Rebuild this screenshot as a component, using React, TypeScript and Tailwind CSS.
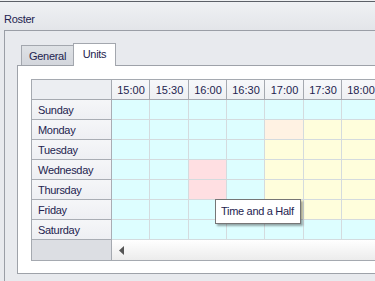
import React from "react";

const C = "bg-[#ddfeff]";
const Y = "bg-[#fffedc]";
const P = "bg-[#fff2e3]";
const K = "bg-[#ffdfe2]";

const times = ["15:00", "15:30", "16:00", "16:30", "17:00", "17:30", "18:00"];
const widths = ["w-[38px]", "w-[39px]", "w-[38px]", "w-[38px]", "w-[39px]", "w-[38px]", "w-[38px]"];

const rows: { day: string; cells: string[] }[] = [
  { day: "Sunday", cells: [C, C, C, C, C, C, C] },
  { day: "Monday", cells: [C, C, C, C, P, Y, Y] },
  { day: "Tuesday", cells: [C, C, C, C, Y, Y, Y] },
  { day: "Wednesday", cells: [C, C, K, C, Y, Y, Y] },
  { day: "Thursday", cells: [C, C, K, C, Y, Y, Y] },
  { day: "Friday", cells: [C, C, C, C, Y, Y, Y] },
  { day: "Saturday", cells: [C, C, C, C, C, C, C] },
];

export default function App() {
  return (
    <div
      className="relative w-[375px] h-[281px] overflow-hidden bg-[#e8eaee] text-[11px] text-[#23234f] flex flex-col"
      style={{ fontFamily: '"Liberation Sans", Arial, sans-serif' }}
    >
      {/* cut-off text at very top */}
      <div className="h-[1px] overflow-hidden bg-[#eef0f2] shrink-0">
        <div className="pl-[131px] -mt-[9px] leading-[11px] text-[#35357a] tracking-[1px]">ooooooooooooo</div>
      </div>
      <div className="h-[1px] bg-[#5c6068] shrink-0" />
      {/* caption */}
      <div className="h-[28px] shrink-0 bg-gradient-to-b from-[#eff1f4] to-[#e3e5e9] pl-[4px] pt-[11px] leading-[13px] tracking-[-0.3px]">
        Roster
      </div>
      {/* group box */}
      <div className="ml-[4px] flex-1 border-t border-l border-[#9a9ea6] bg-[#e8eaee] pl-[12px] pt-[12px] flex flex-col">
        {/* tab strip */}
        <div className="h-[22px] flex items-end pl-[4px] shrink-0 tracking-[-0.3px]">
          <div className="w-[53px] h-[20px] border border-b-0 border-[#a3a7ae] bg-gradient-to-b from-[#dfe2e6] to-[#d3d6dc] pl-[7px] leading-[19px] pt-[1px]">
            General
          </div>
          <div className="relative z-10 -ml-px -mb-px w-[43px] h-[23px] border border-b-0 border-[#a3a7ae] bg-white text-center leading-[20px]">
            Units
          </div>
        </div>
        {/* tab page */}
        <div className="w-[400px] h-[209px] border border-r-0 border-[#9ea2a9] bg-white pl-[13px] pt-[13px]">
          <div className="border-l border-t border-[#a5a9b0] w-[400px]">
            {/* header */}
            <div className="flex h-[20px]">
              <div className="w-[80px] border-r border-b border-[#a5a9b0] bg-[#eceef2]" />
              {times.map((t, i) => (
                <div
                  key={t}
                  className={`${widths[i]} border-r border-b border-[#a5a9b0] bg-gradient-to-b from-[#f7f8fa] to-[#eef0f3] text-center leading-[20px] pl-[1px]`}
                >
                  {t}
                </div>
              ))}
            </div>
            {rows.map((r) => (
              <div key={r.day} className="flex h-[20px]">
                <div className="w-[80px] border-r border-b border-[#a9adb4] bg-gradient-to-b from-[#f5f6f8] to-[#eeeff3] pl-[6px] leading-[20px] tracking-[-0.3px]">
                  {r.day}
                </div>
                {r.cells.map((c, i) => (
                  <div key={i} className={`${widths[i]} border-r border-b border-[#d4dbde] ${c}`} />
                ))}
              </div>
            ))}
            {/* scrollbar row */}
            <div className="flex h-[21px]">
              <div className="w-[80px] border-r border-b border-[#a5a9b0] bg-[#dcdee3]" />
              <div className="flex-1 border-b border-[#a5a9b0] bg-gradient-to-b from-[#ffffff] to-[#ececec] flex items-center pl-[7px]">
                <svg width="5" height="9" viewBox="0 0 5 9">
                  <path d="M5 0 L0 4.5 L5 9 Z" fill="#555555" />
                </svg>
              </div>
            </div>
          </div>
        </div>
      </div>
      {/* tooltip */}
      <div className="absolute left-[215px] top-[199px] w-[86px] h-[25px] border border-[#767676] bg-white pl-[5px] leading-[23px] tracking-[-0.3px] shadow-[2px_2px_2px_rgba(0,0,0,0.35)] whitespace-nowrap">
        Time and a Half
      </div>
    </div>
  );
}
